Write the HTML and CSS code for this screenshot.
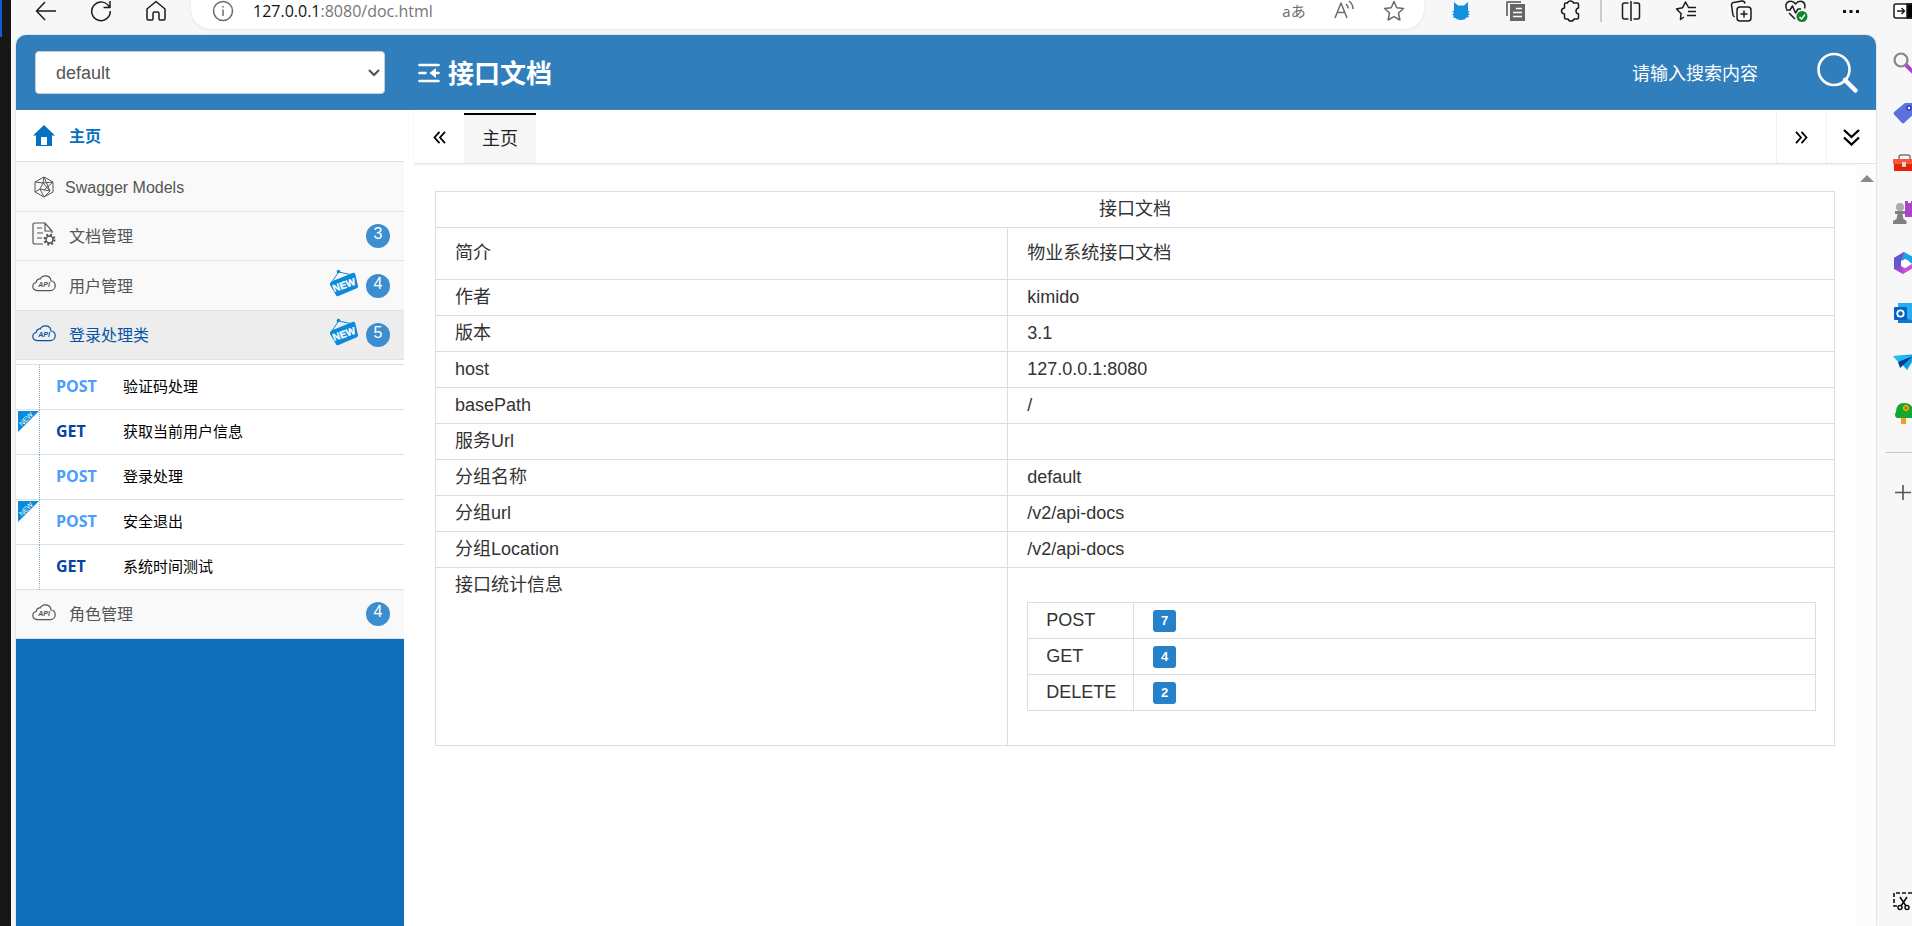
FILE: index.html
```html
<!DOCTYPE html>
<html lang="zh-CN">
<head>
<meta charset="utf-8">
<title>接口文档</title>
<link rel="stylesheet" href="styles.css">
</head>
<body>
<svg class="defs" aria-hidden="true">
  <symbol id="cloud" viewBox="0 0 24 17"><path d="M6 15.6C2.800 15.600 .8 14 .8 11.500c0-2.300 1.500-3.700 3.400-4C4.400 5 6 3.700 8.200 4 9.200 1.900 11 .8 13.300.8c3.200 0 5.500 2.200 5.700 5.200 2.500.2 4.200 2 4.200 4.700s-2 4.900-5 4.900z" fill="none" stroke="currentColor" stroke-width="1.200"/><text x="12" y="12" text-anchor="middle" font-size="7" font-style="italic" font-weight="bold" fill="currentColor">API</text></symbol>
  <symbol id="tag" viewBox="0 0 30 28"><path d="M3 13 9.500 3 24 6" fill="none" stroke="#0a8ada" stroke-width="1"/><circle cx="9.500" cy="2.500" r="1.800" fill="#0a8ada"/><path d="M2.500 12.500 23.500 4q2-.7 2.800 1.200L29 17q.5 1.600-1.200 2.300L9.500 27q-1.800.7-2.600-1L1 16q-.7-2.500 1.500-3.500z" fill="#0a8ada"/><text x="15" y="19.500" text-anchor="middle" transform="rotate(-19 15 16)" font-size="10" font-weight="bold" fill="#fff" stroke="#fff" stroke-width=".3">NEW</text></symbol>
  <symbol id="corner" viewBox="0 0 21 21"><path d="M0 0H21L0 21z" fill="#0a8ada"/><text x="8" y="10.500" text-anchor="middle" transform="rotate(-45 8 8)" font-size="7" fill="#fff">NEW</text></symbol>
</svg>
<div class="desktop">
  <div class="edge"><div class="edge-accent"></div></div>
  <div class="browser">
    <div class="toolbar">
      <div class="nav-buttons">
        <button class="tool" aria-label="后退"><svg width="22" height="22" viewBox="0 0 22 22"><path d="M21 11H2M10 2 1.500 11 10 20"/></svg></button>
        <button class="tool" aria-label="刷新"><svg width="22" height="22" viewBox="0 0 22 22"><path d="M19.500 7.500A9.300 9.300 0 1 0 20.300 11M20 1v6.500h-6.500"/></svg></button>
        <button class="tool" aria-label="主页"><svg width="22" height="22" viewBox="0 0 22 22"><path d="M2 9 11 1.500 20 9v9.500q0 1.500-1.500 1.500H15q-1 0-1-1v-5.500q0-1.500-1.500-1.500h-3Q8 12 8 13.500V19q0 1-1 1H3.500Q2 20 2 18.500z"/></svg></button>
      </div>
      <div class="address">
        <svg class="info" width="24" height="22" viewBox="0 0 24 22"><circle cx="12" cy="11" r="9.500"/><path d="M12 9.500V16M12 6v1.500"/></svg>
        <div class="url"><span class="host">127.0.0.1</span>:8080/doc.html</div>
        <button class="tool small lang" aria-label="翻译">aあ</button>
        <button class="tool small soft" aria-label="朗读"><svg width="20" height="22" viewBox="0 0 20 22"><path d="M1 18 7 3l6 15M3.300 12.500h7.400M12 4q2 1.800 2 4.500M15 1q4 3 4 8"/></svg></button>
        <button class="tool small soft" aria-label="收藏"><svg width="22" height="22" viewBox="0 0 22 22"><path d="m11 1.500 2.800 6.200 6.700.8-5 4.500 1.400 7-5.900-3.400L5.100 20l1.400-7-5-4.500 6.700-.8z"/></svg></button>
      </div>
      <div class="tools">
        <button class="tool" aria-label="扩展猫"><svg width="18" height="20" viewBox="0 0 18 20"><path d="M2 1 6 4.500h6L16 1v9l2 .5-2 1.500 2 1.500-2 .5 1 2-2.500.5Q13 19 9 19t-5.500-2L1 16.500l1-2-2-.5L2 12l-2-1.500L2 10z" fill="#1490df" stroke="none"/></svg></button>
        <button class="tool" aria-label="复制"><svg width="20" height="22" viewBox="0 0 20 22"><path d="M1 16V2H15" stroke="#777" stroke-width="2"/><path d="M4 4h15v17H4z" fill="#666" stroke="none"/><path d="M10 8.500h6M7 12.500h9M7 16.500h9" stroke="#fff"/></svg></button>
        <button class="tool" aria-label="扩展"><svg width="22" height="22" viewBox="0 0 22 22"><path d="M5.500 3h2Q8 1 10.500 1t3 2H17q1.500 0 1.500 1.500V8q-2.500.5-2.500 3t2.500 3v3.500q0 1.500-1.500 1.500h-3q-.5 2-3 2t-3-2H6q-1.500 0-1.500-1.500V14q-3-.5-3-3t3-3V4.500Q4.500 3 5.500 3z"/></svg></button>
        <span class="tool-divider"></span>
        <button class="tool" aria-label="分屏"><svg width="20" height="22" viewBox="0 0 20 22"><path d="M7.500 3H3.500Q1.500 3 1.500 5v12q0 2 2 2h4M10 1v20M12.500 3h4q2 0 2 2v12q0 2-2 2h-4"/></svg></button>
        <button class="tool" aria-label="收藏夹"><svg width="22" height="22" viewBox="0 0 22 22"><path d="M9 17 5.500 19.500 6 13.500 1.500 9 7.500 7.800 10.500 2 13.500 7.500H21M13 11.500h8M12 15.500h9"/></svg></button>
        <button class="tool" aria-label="集锦"><svg width="22" height="22" viewBox="0 0 22 22"><rect x="7" y="7" width="14" height="14" rx="3"/><path d="M14 10.500v7M10.500 14h7M4.500 17Q3 16 2.800 14L1.500 5q-.2-2 2-2.500L12 1q2.500-.2 3 2.500"/></svg></button>
        <button class="tool" aria-label="健康"><svg width="24" height="24" viewBox="0 0 24 24"><path d="M2.500 10Q.5 4 5 2.500 9 1.500 11.500 5 14 1.500 18 2.500 22 4 20.500 9.500M2 11h4l2.500-4 3 7 2.500-4h3M5 14l6 6"/><circle cx="18" cy="17.500" r="5.500" fill="#11852b" stroke="none"/><path d="m15.500 18 2 2 3.500-4.500" stroke="#fff"/></svg></button>
        <button class="tool" aria-label="更多"><svg width="18" height="22" viewBox="0 0 18 22"><path d="M1 10h3v3H1zM7.500 10h3v3h-3zM14 10h3v3h-3z" fill="#111" stroke="none"/></svg></button>
      </div>
      <button class="panel-toggle" aria-label="侧栏"><svg width="24" height="22" viewBox="0 0 24 22"><rect x="1" y="4" width="22" height="14" rx="2" fill="#fff"/><path d="M14 4h10v14H14z" fill="#000"/><path d="M4 11h7M8.500 8l3 3-3 3"/></svg></button>
    </div>
    <div class="viewport">
      <div class="page">
        <header class="header">
          <div class="group">
            <select class="group-select" aria-label="分组"><option>default</option></select>
            <svg class="chevron" width="12" height="8" viewBox="0 0 12 8"><path d="m1 1 5 5 5-5" fill="none" stroke="#555" stroke-width="2.200"/></svg>
          </div>
          <svg class="fold" width="22" height="22" viewBox="0 0 22 22"><path d="M1.500 3h19M1.500 11h6M1.500 19h19M20.500 11H14" stroke="#fff" stroke-width="2.600" stroke-linecap="round"/><path d="M11.500 11l6.500-5v10z" fill="#fff"/></svg>
          <h1 class="title">接口文档</h1>
          <input class="search" type="text" placeholder="请输入搜索内容" aria-label="搜索">
          <button class="search-btn" aria-label="搜索"><svg width="42" height="42" viewBox="0 0 42 42"><circle cx="17" cy="17.500" r="15.500" fill="none" stroke="#fff" stroke-width="2.600"/><path d="m28 28 10.500 10.500" stroke="#fff" stroke-width="4.500" stroke-linecap="round"/></svg></button>
        </header>
        <div class="body">
          <nav class="sidebar">
            <ul class="menu">
              <li class="row home"><span class="icon"><svg width="22" height="22" viewBox="0 0 22 22"><path fill-rule="evenodd" d="M11 0 22 10.500h-3V21H3V10.500H0zM8 12v8h6v-8z" fill="currentColor"/></svg></span><a href="#" class="label">主页</a></li>
              <li class="row models"><span class="icon"><svg width="20" height="22" viewBox="0 0 20 22"><path d="M10 1 19 6v10l-9 5-9-5V6zM1 6l8 1 10-1M10 1 9 7l-3 6 10 2L9 7M10 1l6 14-6 6-4-8-5 3M19 6l-9 8" fill="none" stroke="currentColor"/></svg></span><a href="#" class="label">Swagger Models</a></li>
              <li class="row"><span class="icon raised"><svg width="24" height="24" viewBox="0 0 24 24"><path d="M11 22H3q-2 0-2-2V3q0-2 2-2h10l7 8v2M13 1v8h7M5 6h5M5 11h6M5 16h5" fill="none" stroke="currentColor" stroke-width="1.200"/><circle cx="17.500" cy="17.500" r="4.500" fill="none" stroke="currentColor" stroke-width="3" stroke-dasharray="1.770 1.770"/><circle cx="17.500" cy="17.500" r="3.500" fill="none" stroke="currentColor" stroke-width="1.500"/></svg></span><a href="#" class="label">文档管理</a><span class="count">3</span></li>
              <li class="row"><span class="icon raised"><svg width="24" height="17"><use href="#cloud"/></svg></span><a href="#" class="label">用户管理</a><span class="new"><svg width="30" height="28"><use href="#tag"/></svg></span><span class="count">4</span></li>
              <li class="row open"><span class="icon raised"><svg width="24" height="17"><use href="#cloud"/></svg></span><a href="#" class="label">登录处理类</a><span class="new"><svg width="30" height="28"><use href="#tag"/></svg></span><span class="count">5</span></li>
              <li class="sub-wrap">
                <ul class="sub">
                  <li class="api"><span class="method post">POST</span><a href="#">验证码处理</a></li>
                  <li class="api"><svg class="corner" width="21" height="21"><use href="#corner"/></svg><span class="method get">GET</span><a href="#">获取当前用户信息</a></li>
                  <li class="api"><span class="method post">POST</span><a href="#">登录处理</a></li>
                  <li class="api"><svg class="corner" width="21" height="21"><use href="#corner"/></svg><span class="method post">POST</span><a href="#">安全退出</a></li>
                  <li class="api"><span class="method get">GET</span><a href="#">系统时间测试</a></li>
                </ul>
              </li>
              <li class="row"><span class="icon raised"><svg width="24" height="17"><use href="#cloud"/></svg></span><a href="#" class="label">角色管理</a><span class="count">4</span></li>
            </ul>
          </nav>
          <main class="content">
            <div class="tabs">
              <button class="tab-btn" aria-label="左移"><svg width="13" height="13" viewBox="0 0 13 13"><path d="M6.500.8 1.500 6.500l5 5.700M12 .8 7 6.500l5 5.700"/></svg></button>
              <button class="tab">主页</button>
              <span class="spacer"></span>
              <button class="tab-btn bordered" aria-label="右移"><svg width="13" height="13" viewBox="0 0 13 13"><path d="M1 .8l5 5.700-5 5.700M6.500.8l5 5.700-5 5.700"/></svg></button>
              <button class="tab-btn bordered" aria-label="更多操作"><svg width="17" height="17" viewBox="0 0 17 17"><path d="m1 1 7.500 7L16 1M1 8.500l7.500 7 7.500-7" stroke-width="2.300"/></svg></button>
            </div>
            <div class="scroll-area">
              <div class="doc">
                <table class="info-table">
                  <colgroup><col class="col-key"><col></colgroup>
                  <thead><tr><th colspan="2">接口文档</th></tr></thead>
                  <tbody>
                    <tr class="intro"><td>简介</td><td>物业系统接口文档</td></tr>
                    <tr><td>作者</td><td>kimido</td></tr>
                    <tr><td>版本</td><td>3.1</td></tr>
                    <tr><td>host</td><td>127.0.0.1:8080</td></tr>
                    <tr><td>basePath</td><td>/</td></tr>
                    <tr><td>服务Url</td><td></td></tr>
                    <tr><td>分组名称</td><td>default</td></tr>
                    <tr><td>分组url</td><td>/v2/api-docs</td></tr>
                    <tr><td>分组Location</td><td>/v2/api-docs</td></tr>
                    <tr><td>接口统计信息</td><td class="stats">
                      <table class="stat-table">
                        <tbody>
                          <tr><td class="stat-name">POST</td><td><span class="num">7</span></td></tr>
                          <tr><td class="stat-name">GET</td><td><span class="num">4</span></td></tr>
                          <tr><td class="stat-name">DELETE</td><td><span class="num">2</span></td></tr>
                        </tbody>
                      </table>
                    </td></tr>
                  </tbody>
                </table>
              </div>
              <div class="scrollbar"><span class="arrow-up"></span></div>
            </div>
          </main>
        </div>
      </div>
      <aside class="edge-bar">
        <button class="app" aria-label="搜索"><svg width="24" height="24" viewBox="0 0 24 24"><path d="m13 14 9 9" stroke="#b43bd6" stroke-width="4"/><circle cx="8" cy="9" r="6.500" fill="#f7f7f7" stroke="#858585" stroke-width="2.200"/></svg></button>
        <button class="app" aria-label="购物"><svg width="24" height="24" viewBox="0 0 24 24"><path d="M12 2h8q3 0 3 3v6L11 22q-1 .8-2 0l-8-8.500Q.5 12 1 11z" fill="#5b72dc"/><circle cx="16" cy="7" r="2" fill="#fff" stroke="#353cae" stroke-width="1.500"/></svg></button>
        <button class="app" aria-label="工具"><svg width="24" height="24" viewBox="0 0 24 24"><path d="M6 8V6q0-2 2-2h7q2 0 2 2v2" fill="none" stroke="#777" stroke-width="1.500"/><path d="M0 8h24v5H0z" fill="#fa5638"/><path d="M1 13h23v7H1z" fill="#e62208"/><rect x="9" y="11" width="4" height="5" rx="1" fill="#ddd"/></svg></button>
        <button class="app" aria-label="游戏"><svg width="24" height="24" viewBox="0 0 24 24"><path d="M12 0h3v2h3V0h6v16H12z" fill="#ad42cb"/><circle cx="7" cy="6" r="4" fill="#aaa"/><path d="M2 10h10v3H9.500l1 5 3 2v3H0v-3l3.500-2 1-5H2z" fill="#808080"/></svg></button>
        <button class="app" aria-label="Microsoft 365"><svg width="24" height="24" viewBox="0 0 24 24"><path d="M11 1 1 7v11l9 5 5-4-7-4V9z" fill="#a349cf"/><path d="M1 7 11 1l3 7-6 2v6L1 18z" fill="#6657cd"/><path d="m11 1 11 6v8l-8-6-5-1z" fill="#15a6e8"/><path d="m10 23 12-7v-5l-8 5-5 2z" fill="#ca55cf"/><path d="m8 10 4-2 4 2v4l-4 3-4-2z" fill="#fff"/></svg></button>
        <button class="app" aria-label="Outlook"><svg width="24" height="24" viewBox="0 0 24 24"><path d="M5 2h19v20H5z" fill="#27aeef"/><path d="m5 13 19 9H5z" fill="#1179cd"/><rect x="1" y="6" width="13" height="13" rx="1" fill="#0860c4"/><circle cx="7.500" cy="12.500" r="3.200" fill="none" stroke="#fff" stroke-width="1.800"/></svg></button>
        <button class="app" aria-label="发送"><svg width="24" height="24" viewBox="0 0 24 24"><path d="M0 5 24 3 14 19 8 12z" fill="#0aa1ea"/><path d="m0 5 20 0L5 11z" fill="#20bdf5"/><path d="m5 11 15-6L7 17z" fill="#083e83"/></svg></button>
        <button class="app" aria-label="花园"><svg width="24" height="24" viewBox="0 0 24 24"><path d="M8 15h5v8H8z" fill="#f3a01b"/><path d="M4 17q-3.500-2-1-6Q3 2 11 2t9 7q4 6 0 8z" fill="#12a930"/><path d="M13 4v6M10 7h6" stroke="#ffb900" stroke-width="3"/><circle cx="13" cy="7" r="1.500" fill="#e2491f"/></svg></button>
        <span class="app-divider"></span>
        <button class="app" aria-label="添加"><svg width="24" height="24" viewBox="0 0 24 24"><path d="M10 5v15M2 12.500h16" stroke="#555" stroke-width="1.600"/></svg></button>
        <button class="app last" aria-label="截图"><svg width="24" height="24" viewBox="0 0 24 24"><path d="M4 17H1V4h22v13h-3" fill="none" stroke="#111" stroke-width="1.600" stroke-dasharray="4 2"/><path d="m7 8 6 9M14 8l-6 9" stroke="#111" stroke-width="1.600"/><circle cx="7" cy="18.500" r="2" fill="none" stroke="#111" stroke-width="1.500"/><circle cx="14" cy="18.500" r="2" fill="none" stroke="#111" stroke-width="1.500"/></svg></button>
      </aside>
    </div>
  </div>
</div>
</body>
</html>
```
FILE: styles.css
```css
* { box-sizing: border-box; }
body {
  margin: 0;
  overflow: hidden;
  font-family: "Liberation Sans", "Noto Sans CJK SC", sans-serif;
  font-size: 16px;
  color: #333;
}
button { margin: 0; padding: 0; border: 0; background: none; font: inherit; color: inherit; }
ul { margin: 0; padding: 0; list-style: none; }
a { color: inherit; text-decoration: none; }
svg { flex: none; display: block; }
.defs { display: none; }

.desktop { display: flex; height: 100vh; background: #f7f7f7; }
.edge { flex: none; width: 11px; background: #171717; }
.edge-accent { width: 2px; height: 37px; background: #0a5fd4; }
.browser { flex: 1; min-width: 0; display: flex; flex-direction: column; }

/* Browser toolbar */
.toolbar { flex: none; display: flex; height: 35px; }
.nav-buttons, .tools { display: flex; height: 22px; }
.nav-buttons { padding: 0 8px 0 7px; }
.tools { padding-left: 9px; }
.tool { display: flex; align-items: center; justify-content: center; width: 55px; height: 22px; }
.tool.small { width: 50px; }
.toolbar svg { fill: none; stroke: #1b1b1b; stroke-width: 1.5; stroke-linejoin: round; }
.toolbar .soft svg, .toolbar .info { stroke: #6b6b6b; }
.tool-divider { width: 2px; margin: 0 1px 0 2px; background: #ccc; }
.address {
  flex: 1;
  display: flex;
  align-items: center;
  height: 29px;
  padding: 0 5px 7px 20px;
  background: #fff;
  border-radius: 0 0 20px 20px;
  box-shadow: 0 1px 3px #e4e4e4;
}
.url { flex: 1; padding-left: 18px; font-family: "Open Sans", "Noto Sans", sans-serif; color: #767676; }
.host { color: #111; }
.lang { font-family: "Open Sans", "Noto Sans CJK JP", sans-serif; font-size: 15px; line-height: 18px; color: #6b6b6b; }
.panel-toggle { width: 19px; height: 22px; margin-left: 15px; overflow: hidden; }

/* Page frame */
.viewport { flex: 1; min-height: 0; display: flex; padding-left: 5px; }
.page {
  flex: 1;
  min-width: 0;
  display: flex;
  flex-direction: column;
  overflow: hidden;
  background: #fff;
  border-radius: 10px 10px 0 0;
  box-shadow: 0 0 2px #bbb;
}
.header { flex: none; display: flex; align-items: center; height: 75px; padding: 0 17px 0 19px; background: #307ebc; }
.group { display: grid; align-items: center; width: 350px; }
.group-select {
  grid-area: 1 / 1;
  appearance: none;
  height: 43px;
  padding: 0 20px 0 20px;
  border: 1px solid #ccc;
  border-radius: 4px;
  background: #fff;
  color: #555;
  font: inherit;
  font-size: 18px;
}
.chevron { grid-area: 1 / 1; justify-self: end; margin-right: 5px; pointer-events: none; }
.fold { margin-left: 33px; }
.title { flex: 1; margin: 0; padding: 3px 0 0 8px; font-size: 26px; line-height: 36px; color: #fff; }
.search { width: 165px; padding: 3px 0 0; border: 0; outline: 0; background: transparent; font: inherit; font-size: 18px; color: #fff; }
.search::placeholder { color: #fff; opacity: 1; }
.search-btn { margin-left: 20px; }
.body { flex: 1; min-height: 0; display: flex; }

/* Side menu */
.sidebar { flex: none; width: 388px; background: #0f6eb7; }
.row {
  display: flex;
  align-items: center;
  height: 49px;
  padding: 0 14px 0 16px;
  border-bottom: 1px solid #e2e2e2;
  background: #f9f9f9;
  color: #555;
}
.row:nth-child(even) { height: 50px; }
.row.home { height: 52px; background: #fff; color: #0272c1; font-weight: bold; }
.row.open { background: #ededed; color: #0554a8; }
.icon { display: flex; justify-content: center; width: 24px; }
.icon.raised { padding-bottom: 4px; }
.label { flex: 1; padding: 2px 0 0 13px; line-height: 24px; }
.models .label { padding-left: 9px; }
.new { padding: 0 7px 6px 0; }
.count { width: 24px; height: 24px; border-radius: 12px; background: #3d8ed0; color: #fff; line-height: 20px; text-align: center; }
.sub-wrap { padding-top: 4px; background: #fff; }
.sub { border-top: 1px solid #dfdfe8; }
.api {
  position: relative;
  display: flex;
  align-items: center;
  height: 45px;
  padding: 0 0 3px 40px;
  border-bottom: 1px solid #dfdfe8;
  font-size: 15px;
  color: #000;
}
.api::before { content: ""; position: absolute; left: 23px; top: 0; bottom: -1px; border-left: 1px dotted #7fb0cc; }
.corner { position: absolute; left: 2px; top: 1px; }
.method { width: 67px; font-family: "Open Sans", "Noto Sans", sans-serif; font-size: 16px; font-weight: bold; }
.post { color: #4a9dfc; }
.get { color: #0544a5; }

/* Tabs */
.content { flex: 1; min-width: 0; display: flex; flex-direction: column; padding-left: 10px; }
.tabs { flex: none; display: flex; height: 54px; padding-top: 3px; border-bottom: 1px solid #e4e4e4; box-shadow: 0 1px 2px #f0f0f0; }
.tab-btn { display: flex; align-items: center; justify-content: center; width: 50px; padding-bottom: 2px; }
.tab-btn svg { fill: none; stroke: #000; stroke-width: 1.8; }
.bordered { border-left: 1px solid #f0f0f0; }
.tab { width: 72px; padding-bottom: 5px; border-top: 2px solid #000; background: #f6f6f6; font-size: 18px; color: #222; }
.spacer { flex: 1; }

/* Document information */
.scroll-area { flex: 1; min-height: 0; display: flex; }
.doc { flex: 1; padding: 27px 22px 0 21px; }
.scrollbar { width: 19px; padding: 11px 3px; background: #fcfcfc; }
.arrow-up { display: block; border: 7px solid transparent; border-top: 0; border-bottom-color: #8a8a8a; }
table { width: 100%; border-collapse: collapse; }
.info-table { table-layout: fixed; font-size: 18px; line-height: 25px; }
.col-key { width: 40.9%; }
td, th { height: 36px; padding: 0 19px 1px; border: 1px solid #ddd; text-align: left; vertical-align: middle; font-weight: normal; }
th { text-align: center; }
.intro td { height: 52px; }
.info-table td { vertical-align: top; padding-top: 5px; }
.info-table .intro td { vertical-align: middle; padding-top: 0; }
.info-table .stats { padding: 34px 18px 34px 19px; }
.info-table .stat-name { width: 106px; padding-right: 17px; padding-left: 18px; }
.num { display: block; width: 23px; height: 22px; margin-top: 2px; border-radius: 3px; background: #2481ca; color: #fff; font-size: 13px; font-weight: bold; line-height: 22px; text-align: center; }

/* Browser side bar */
.edge-bar { flex: none; width: 36px; display: flex; flex-direction: column; padding: 3px 0 0 17px; overflow: hidden; }
.app { flex: none; display: flex; align-items: center; width: 24px; height: 50px; }
.app-divider { height: 1px; margin: 14px 0 14px -7px; background: #c8c8c8; flex: none; }
.app.last { margin-top: auto; }
```
